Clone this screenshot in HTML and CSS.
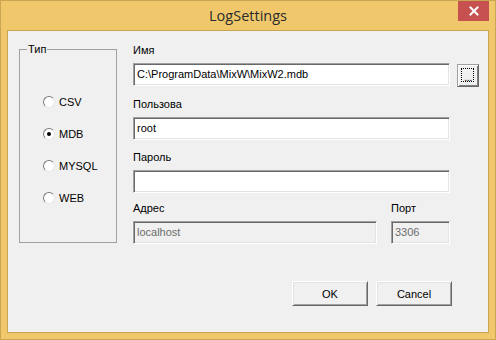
FILE: index.html
```html
<!DOCTYPE html>
<html>
<head>
<meta charset="utf-8">
<link rel="stylesheet" href="styles.css">
</head>
<body>
<div class="window">
  <div class="titlebar">
    <span></span>
    <span class="title">LogSettings</span>
    <span class="close-cell">
      <span class="close">
        <svg width="10" height="10" viewBox="0 0 10 10"><path d="M1.5 1.5 L8.5 8.5 M8.5 1.5 L1.5 8.5" stroke="#fff" stroke-width="2" stroke-linecap="square"/></svg>
      </span>
    </span>
  </div>
  <div class="client">
    <div class="top">
      <fieldset class="group">
        <legend class="legend">Тип</legend>
        <div class="radios">
          <div class="radio"><span class="dot"></span><span>CSV</span></div>
          <div class="radio"><span class="dot checked"></span><span>MDB</span></div>
          <div class="radio"><span class="dot"></span><span>MYSQL</span></div>
          <div class="radio"><span class="dot"></span><span>WEB</span></div>
        </div>
      </fieldset>
      <div class="fields">
        <div class="field">
          <div class="label">Имя</div>
          <div class="row">
            <div class="edit wide">C:\ProgramData\MixW\MixW2.mdb</div>
            <div class="browse"><span>...</span></div>
          </div>
        </div>
        <div class="field">
          <div class="label">Пользова</div>
          <div class="edit wide">root</div>
        </div>
        <div class="field">
          <div class="label">Пароль</div>
          <div class="edit wide"></div>
        </div>
        <div class="row addr-row">
          <div class="field">
            <div class="label">Адрес</div>
            <div class="edit disabled addr">localhost</div>
          </div>
          <div class="field">
            <div class="label">Порт</div>
            <div class="edit disabled port">3306</div>
          </div>
        </div>
      </div>
    </div>
    <div class="buttons">
      <div class="btn">OK</div>
      <div class="btn">Cancel</div>
    </div>
  </div>
</div>
</body>
</html>
```
FILE: styles.css
```css
html, body {
  margin: 0;
  padding: 0;
}
body {
  width: 496px;
  height: 340px;
  overflow: hidden;
  background: #f0c86b;
}
.window {
  box-sizing: border-box;
  width: 496px;
  height: 340px;
  border: 1px solid #c9a652;
  background: #f0c86b;
  display: flex;
  flex-direction: column;
}
.titlebar {
  height: 29px;
  display: grid;
  grid-template-columns: 1fr auto 1fr;
  align-items: start;
}
.title {
  font-family: "Open Sans", "Noto Sans", sans-serif;
  font-size: 14.5px;
  color: #2b2b2b;
  line-height: 20px;
  margin-top: 5px;
}
.close-cell {
  display: flex;
  justify-content: flex-end;
  padding-right: 6px;
}
.close {
  width: 31px;
  height: 20px;
  background: #c75050;
  display: flex;
  align-items: center;
  justify-content: center;
}
.client {
  box-sizing: border-box;
  height: 303px;
  margin: 0 6px;
  border: 1px solid #c9a652;
  background: #f0f0f0;
  padding: 11px 0 0 11px;
  font-family: "Liberation Sans", Arial, sans-serif;
  font-size: 11px;
  color: #000;
  display: flex;
  flex-direction: column;
}
.top {
  display: flex;
  align-items: flex-start;
}
.group {
  box-sizing: border-box;
  width: 98px;
  height: 201px;
  margin: 0;
  padding: 0 0 0 23px;
  border: 1px solid #a0a0a0;
}
.legend {
  padding: 0 1px;
  margin-left: -16px;
  line-height: 14px;
}
.radios {
  display: flex;
  flex-direction: column;
  gap: 18px;
  margin-top: 39px;
}
.radio {
  display: flex;
  align-items: center;
  gap: 4px;
  height: 14px;
}
.dot {
  box-sizing: border-box;
  width: 12px;
  height: 12px;
  border-radius: 50%;
  border: 1px solid;
  border-color: #7a7a7a #e6e6e6 #e6e6e6 #7a7a7a;
  background: #fff;
  display: flex;
  align-items: center;
  justify-content: center;
}
.dot.checked::after {
  content: "";
  width: 4px;
  height: 4px;
  border-radius: 50%;
  background: #000;
}
.fields {
  margin-left: 16px;
  margin-top: 1px;
  display: flex;
  flex-direction: column;
  gap: 10px;
}
.field {
  display: flex;
  flex-direction: column;
}
.label {
  line-height: 14px;
  margin-bottom: 6px;
}
.row {
  display: flex;
  gap: 7px;
}
.addr-row {
  gap: 14px;
  margin-top: -2px;
}
.edit {
  box-sizing: border-box;
  height: 23px;
  background: #fff;
  border: 1px solid;
  border-color: #a0a0a0 #fff #fff #a0a0a0;
  box-shadow: inset 1px 1px 0 #696969, inset -1px -1px 0 #e3e3e3;
  padding: 0 3px;
  line-height: 21px;
  white-space: nowrap;
  overflow: hidden;
}
.wide {
  width: 317px;
}
.disabled {
  background: #f0f0f0;
  color: #6d6d6d;
}
.addr {
  width: 244px;
}
.port {
  width: 59px;
}
.browse {
  box-sizing: border-box;
  width: 22px;
  height: 23px;
  margin-top: 1px;
  background: #f0f0f0;
  border: 1px solid;
  border-color: #a0a0a0 #696969 #696969 #a0a0a0;
  box-shadow: inset 1px 1px 0 #fff, inset -1px -1px 0 #808080;
  position: relative;
  display: flex;
  align-items: flex-end;
  justify-content: center;
  line-height: 12px;
  padding-bottom: 3px;
  letter-spacing: -0.5px;
}
.browse::after {
  content: "";
  position: absolute;
  left: 3px;
  top: 3px;
  right: 4px;
  bottom: 4px;
  border: 1px dotted #000;
}
.buttons {
  display: flex;
  justify-content: flex-end;
  gap: 8px;
  margin-top: 37px;
  padding-right: 36px;
}
.btn {
  box-sizing: border-box;
  width: 76px;
  height: 25px;
  background: #f0f0f0;
  border: 1px solid;
  border-color: #fff #696969 #696969 #fff;
  box-shadow: inset 1px 1px 0 #e3e3e3, inset -1px -1px 0 #a0a0a0;
  display: flex;
  align-items: center;
  justify-content: center;
}
```
